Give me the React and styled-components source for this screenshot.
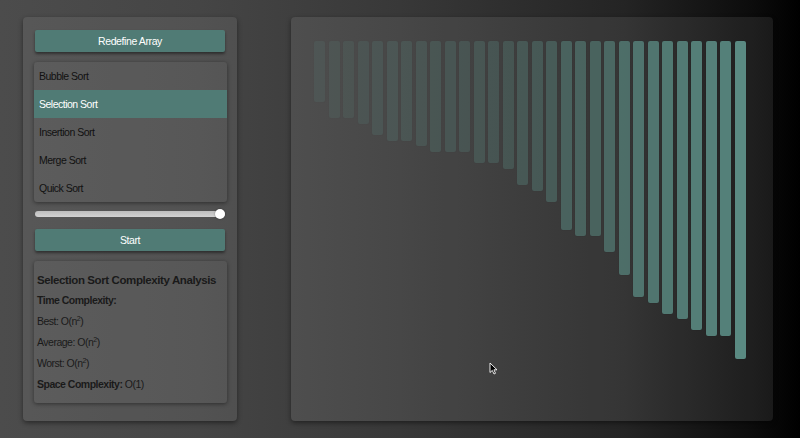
import React, { useState } from "react";
import styled, { createGlobalStyle } from "styled-components";

const GlobalStyle = createGlobalStyle`
  html, body {
    margin: 0;
    padding: 0;
    background: #000;
  }
  body {
    font-family: "Liberation Sans", Arial, sans-serif;
  }
`;

const Page = styled.div`
  position: relative;
  width: 800px;
  height: 438px;
  box-sizing: border-box;
  padding: 17px 27px 17px 23px;
  display: flex;
  gap: 54px;
  background: linear-gradient(90deg, #4c4c4c 0%, #454545 25%, #383838 50%, #242424 78%, #0c0c0c 94%, #000 100%);
  overflow: hidden;
`;

const SidePanel = styled.div`
  width: 214px;
  box-sizing: border-box;
  padding: 13px 12px 0 11px;
  display: flex;
  flex-direction: column;
  background: rgba(255, 255, 255, 0.07);
  border-radius: 4px;
  box-shadow: 0 2px 5px rgba(0, 0, 0, 0.45);
`;

const TealButton = styled.button`
  width: 190px;
  height: 22px;
  margin-left: 1px;
  border: none;
  border-radius: 2px;
  background: #507b75;
  color: #fff;
  font-family: "Liberation Sans", Arial, sans-serif;
  font-size: 10.5px;
  letter-spacing: -0.4px;
  box-shadow: 0 2px 3px rgba(0, 0, 0, 0.45);
  cursor: pointer;
`;

const AlgoList = styled.div`
  margin-top: 10px;
  width: 193px;
  display: flex;
  flex-direction: column;
  border-radius: 3px;
  background: rgba(255, 255, 255, 0.03);
  box-shadow: 0 1px 4px rgba(0, 0, 0, 0.45);
  overflow: hidden;
`;

const AlgoItem = styled.div`
  height: 28px;
  display: flex;
  align-items: center;
  padding-left: 5px;
  font-size: 10.5px;
  letter-spacing: -0.5px;
  color: ${(p) => (p.$active ? "#fff" : "#111")};
  background: ${(p) => (p.$active ? "#507b75" : "transparent")};
  cursor: pointer;
`;

const Slider = styled.input`
  -webkit-appearance: none;
  appearance: none;
  width: 190px;
  height: 10px;
  margin: 7px 0 0 1px;
  background: transparent;

  &::-webkit-slider-runnable-track {
    height: 6px;
    border-radius: 3px;
    background: linear-gradient(180deg, #bdbdbd, #d2d2d2);
  }
  &::-webkit-slider-thumb {
    -webkit-appearance: none;
    width: 10px;
    height: 10px;
    margin-top: -2px;
    border-radius: 50%;
    background: #fff;
    box-shadow: 0 0 2px rgba(0, 0, 0, 0.4);
  }
`;

const StartButton = styled(TealButton)`
  margin-top: 10px;
`;

const InfoBox = styled.div`
  margin-top: 10px;
  width: 193px;
  height: 142px;
  box-sizing: border-box;
  padding: 11px 3px 0 3px;
  display: flex;
  flex-direction: column;
  gap: 7px;
  border-radius: 3px;
  background: rgba(255, 255, 255, 0.03);
  box-shadow: 0 1px 4px rgba(0, 0, 0, 0.45);
  color: #1a1a1a;
`;

const InfoTitle = styled.h3`
  margin: 0 0 -2px;
  font-size: 11.5px;
  line-height: 16px;
  letter-spacing: -0.4px;
  font-weight: bold;
`;

const InfoLine = styled.p`
  margin: 0;
  font-size: 10.5px;
  line-height: 14px;
  letter-spacing: -0.5px;
  font-weight: ${(p) => (p.$bold ? "bold" : "normal")};

  sup {
    font-size: 7px;
    line-height: 0;
  }
  b {
    font-weight: bold;
  }
`;

const Stage = styled.div`
  flex: 1;
  box-sizing: border-box;
  padding: 24px 27px 0 23px;
  display: flex;
  align-items: flex-start;
  gap: 3.5px;
  background: rgba(255, 255, 255, 0.08);
  border-radius: 4px;
  box-shadow: 0 2px 5px rgba(0, 0, 0, 0.45);
`;

const Bar = styled.div`
  width: 11px;
  flex-shrink: 0;
  border-radius: 2px;
  background: rgb(90, 138, 130);
  box-shadow: 0 0 1px rgba(0, 0, 0, 0.3);
`;

const Cursor = styled.svg`
  position: absolute;
  left: 489px;
  top: 362px;
`;

const heights = [
  61, 77, 77, 83, 94, 100, 100, 105, 111, 111, 111, 122, 122, 128, 144,
  150, 161, 189, 195, 195, 211, 234, 256, 262, 273, 278, 289, 295, 295, 318,
];
const maxHeight = Math.max(...heights);

const algorithms = [
  "Bubble Sort",
  "Selection Sort",
  "Insertion Sort",
  "Merge Sort",
  "Quick Sort",
];

const App = () => {
  const [selected, setSelected] = useState("Selection Sort");
  const [speed, setSpeed] = useState(100);

  return (
    <>
      <GlobalStyle />
      <Page>
        <SidePanel>
          <TealButton>Redefine Array</TealButton>
          <AlgoList>
            {algorithms.map((name) => (
              <AlgoItem
                key={name}
                $active={name === selected}
                onClick={() => setSelected(name)}
              >
                {name}
              </AlgoItem>
            ))}
          </AlgoList>
          <Slider
            type="range"
            min="0"
            max="100"
            value={speed}
            onChange={(e) => setSpeed(Number(e.target.value))}
          />
          <StartButton>Start</StartButton>
          <InfoBox>
            <InfoTitle>{selected} Complexity Analysis</InfoTitle>
            <InfoLine $bold>Time Complexity:</InfoLine>
            <InfoLine>
              Best: O(n<sup>2</sup>)
            </InfoLine>
            <InfoLine>
              Average: O(n<sup>2</sup>)
            </InfoLine>
            <InfoLine>
              Worst: O(n<sup>2</sup>)
            </InfoLine>
            <InfoLine>
              <b>Space Complexity:</b> O(1)
            </InfoLine>
          </InfoBox>
        </SidePanel>

        <Stage>
          {heights.map((h, i) => (
            <Bar
              key={i}
              style={{
                height: `${h}px`,
                opacity: Math.max(0.15, Math.pow(h / maxHeight, 1.3)),
              }}
            />
          ))}
        </Stage>

        <Cursor width="9" height="13" viewBox="0 0 9 13">
          <path
            d="M1 1 L1 10.5 L3.3 8.4 L5 12 L6.5 11.3 L4.9 7.8 L8 7.8 Z"
            fill="#000"
            stroke="#fff"
            strokeWidth="0.9"
            strokeLinejoin="round"
          />
        </Cursor>
      </Page>
    </>
  );
};

export default App;
